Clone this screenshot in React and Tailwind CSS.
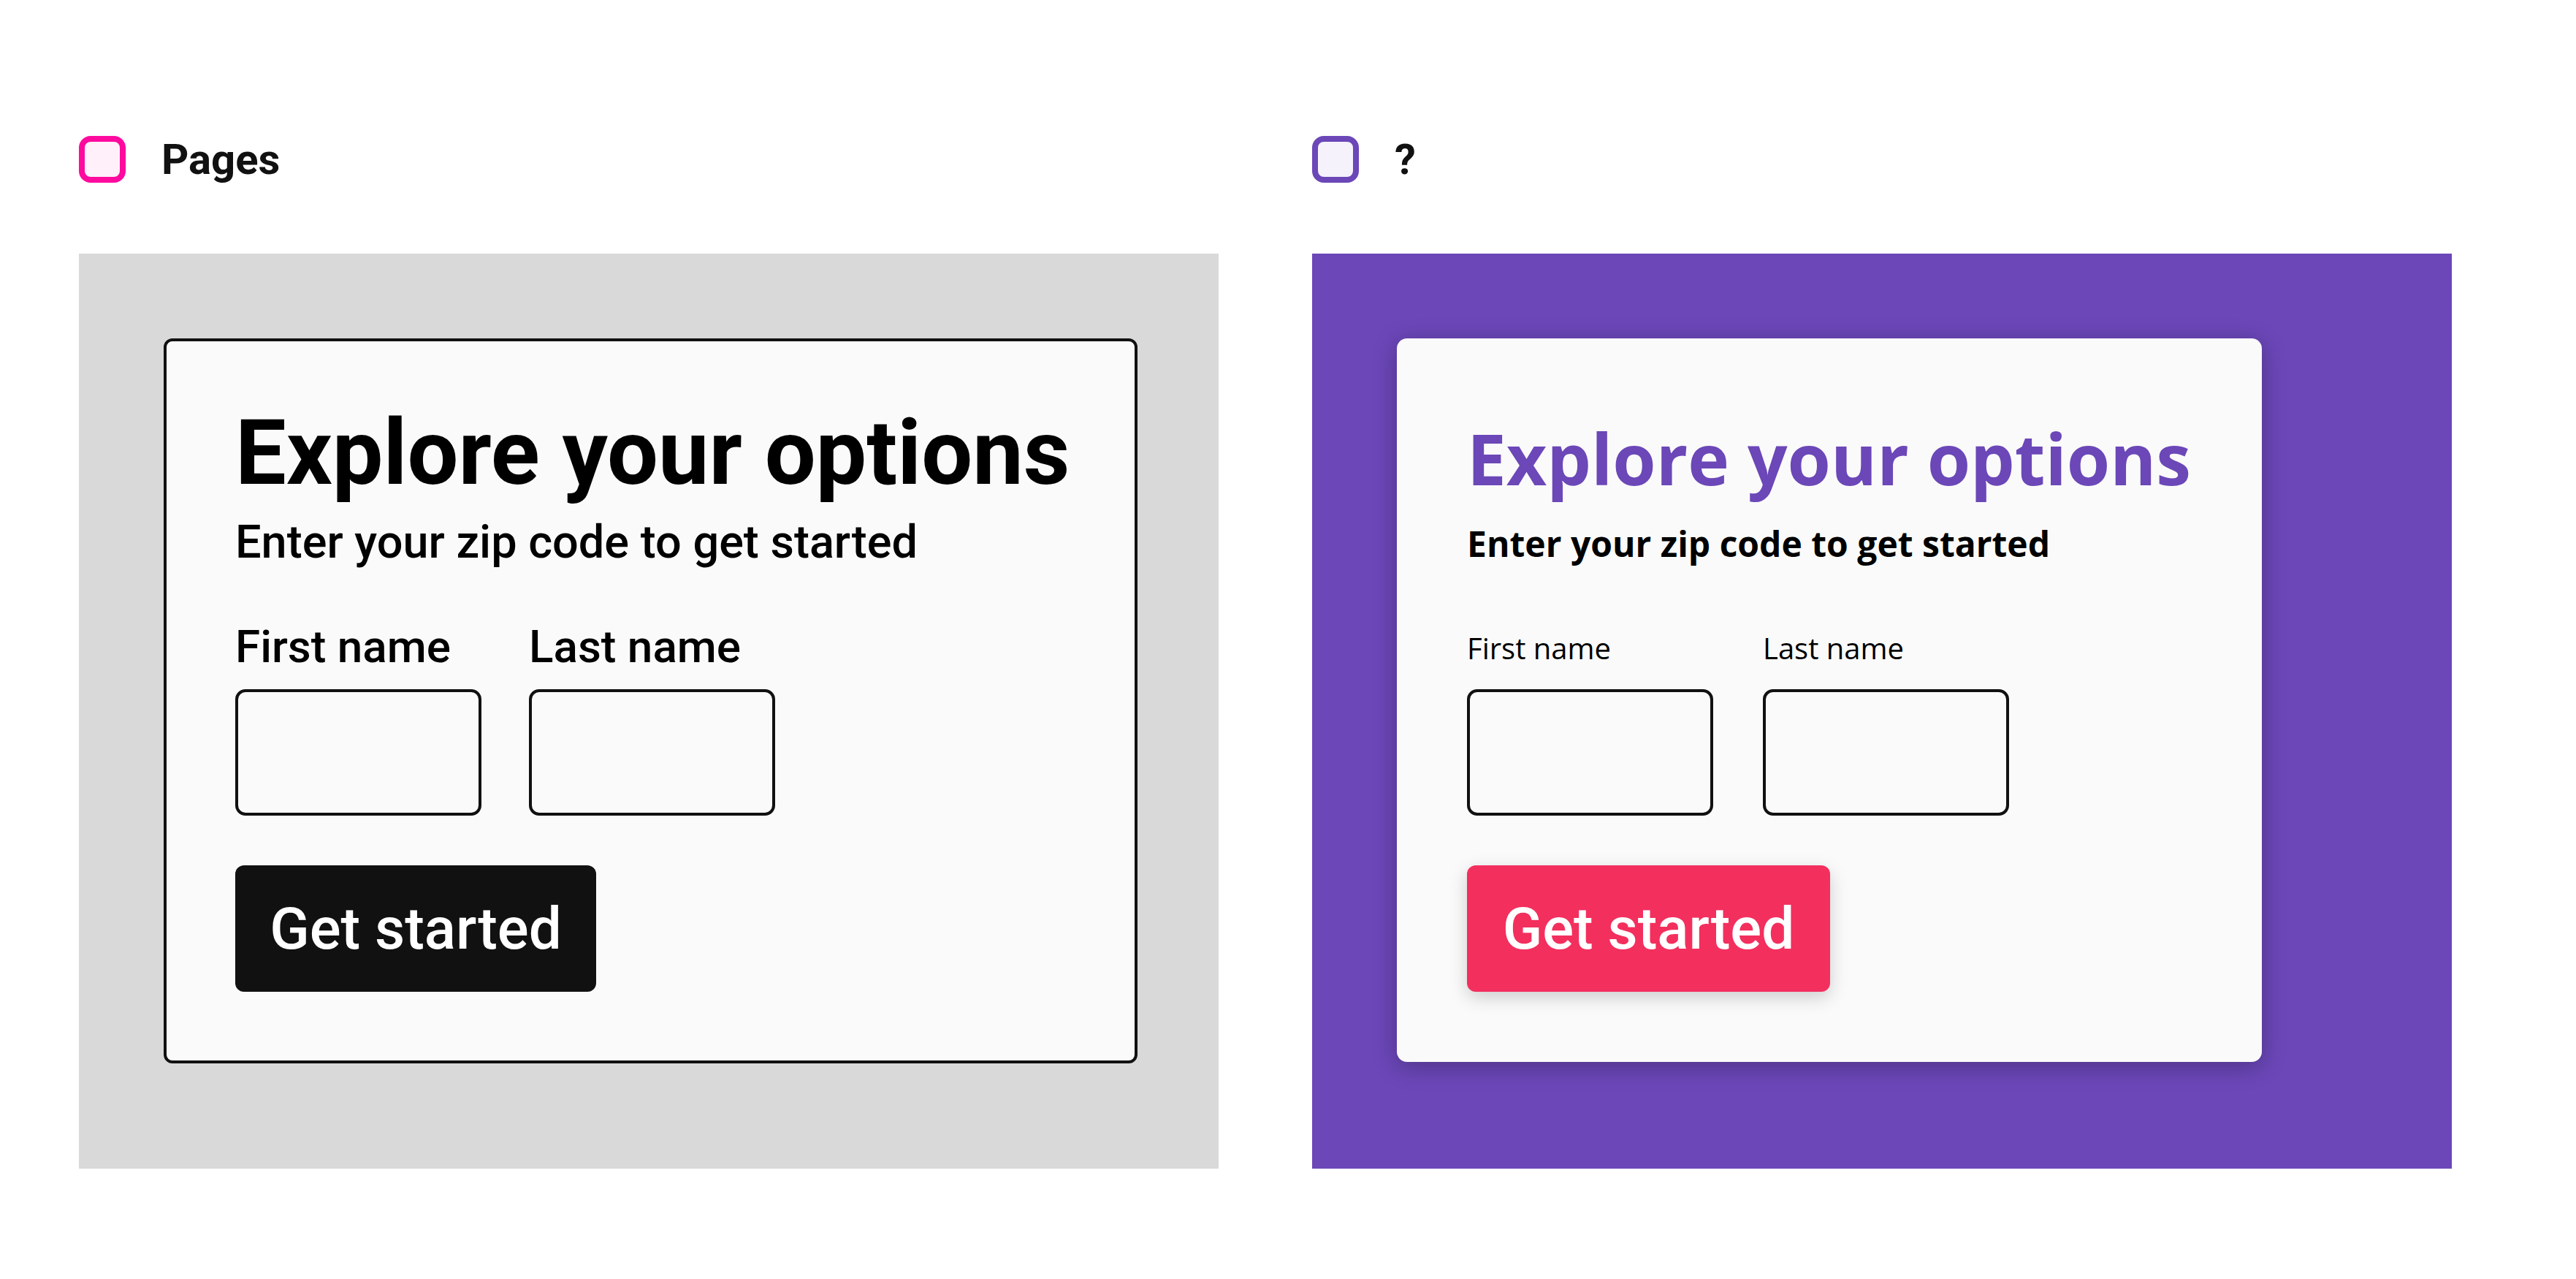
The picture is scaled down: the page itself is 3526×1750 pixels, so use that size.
import React from 'react';

const roboto = { fontFamily: 'Roboto, "Liberation Sans", sans-serif' };
const openSans = { fontFamily: '"Open Sans", "Liberation Sans", sans-serif' };

const Legend = ({ label, boxClass }) => (
  <div className="flex items-center gap-[49px] h-[64px]">
    <div className={`w-[64px] h-[64px] rounded-2xl border-[8px] ${boxClass}`} />
    <span className="text-[58px] font-bold leading-none text-[#111111]" style={roboto}>{label}</span>
  </div>
);

const Field = ({ label, labelClass, font }) => (
  <div className="flex flex-col">
    <span className={labelClass} style={font}>{label}</span>
    <input className="w-[337px] h-[173px] rounded-[14px] border-4 border-[#111111] bg-[#fafafa] outline-none" />
  </div>
);

export default function App() {
  return (
    <div className="min-h-screen w-full bg-white pt-[186px] pl-[108px] flex gap-[128px]">
      {/* Pages */}
      <div className="flex flex-col">
        <Legend label="Pages" boxClass="border-[#ff0a9f] bg-[#fff0f9]" />
        <div className="mt-[97px] w-[1560px] h-[1252px] bg-[#d9d9d9] pt-[116px] pl-[116px]">
          <div className="w-[1333px] rounded-xl border-4 border-[#111111] bg-[#fafafa] px-[94px] pt-[91px] pb-[94px] text-black" style={roboto}>
            <h1 className="text-[124px] font-bold leading-none whitespace-nowrap">Explore your options</h1>
            <p className="mt-[28px] text-[63px] font-medium leading-none whitespace-nowrap">Enter your zip code to get started</p>
            <div className="mt-[81px] flex gap-[65px]">
              <Field label="First name" font={roboto} labelClass="text-[62px] font-medium leading-none mb-[27px]" />
              <Field label="Last name" font={roboto} labelClass="text-[62px] font-medium leading-none mb-[27px]" />
            </div>
            <button className="mt-[68px] w-[494px] h-[173px] rounded-xl bg-[#111111] text-white text-[80px] font-medium leading-none flex items-center justify-center">
              Get started
            </button>
          </div>
        </div>
      </div>

      {/* ? */}
      <div className="flex flex-col">
        <Legend label="?" boxClass="border-[#6b47b8] bg-[#f5f2fb]" />
        <div className="mt-[97px] w-[1560px] h-[1252px] bg-[#6b47b8] pt-[116px] pl-[116px]">
          <div className="w-[1184px] rounded-[14px] bg-[#fafafa] p-[96px] shadow-[0_6px_32px_rgba(0,0,0,0.28)]">
            <h1 className="mt-[20px] text-[96px] font-bold leading-none whitespace-nowrap text-[#6b47b8]" style={openSans}>Explore your options</h1>
            <p className="mt-[45px] text-[48px] font-bold leading-none whitespace-nowrap text-black" style={openSans}>Enter your zip code to get started</p>
            <div className="mt-[99px] flex gap-[68px]">
              <Field label="First name" font={openSans} labelClass="text-[40px] leading-none text-black mb-[36px]" />
              <Field label="Last name" font={openSans} labelClass="text-[40px] leading-none text-black mb-[36px]" />
            </div>
            <button className="mt-[68px] w-[497px] h-[173px] rounded-xl bg-[#f32f5e] text-white text-[80px] font-medium leading-none flex items-center justify-center shadow-[0_8px_24px_rgba(0,0,0,0.18)]" style={roboto}>
              Get started
            </button>
          </div>
        </div>
      </div>
    </div>
  );
}
